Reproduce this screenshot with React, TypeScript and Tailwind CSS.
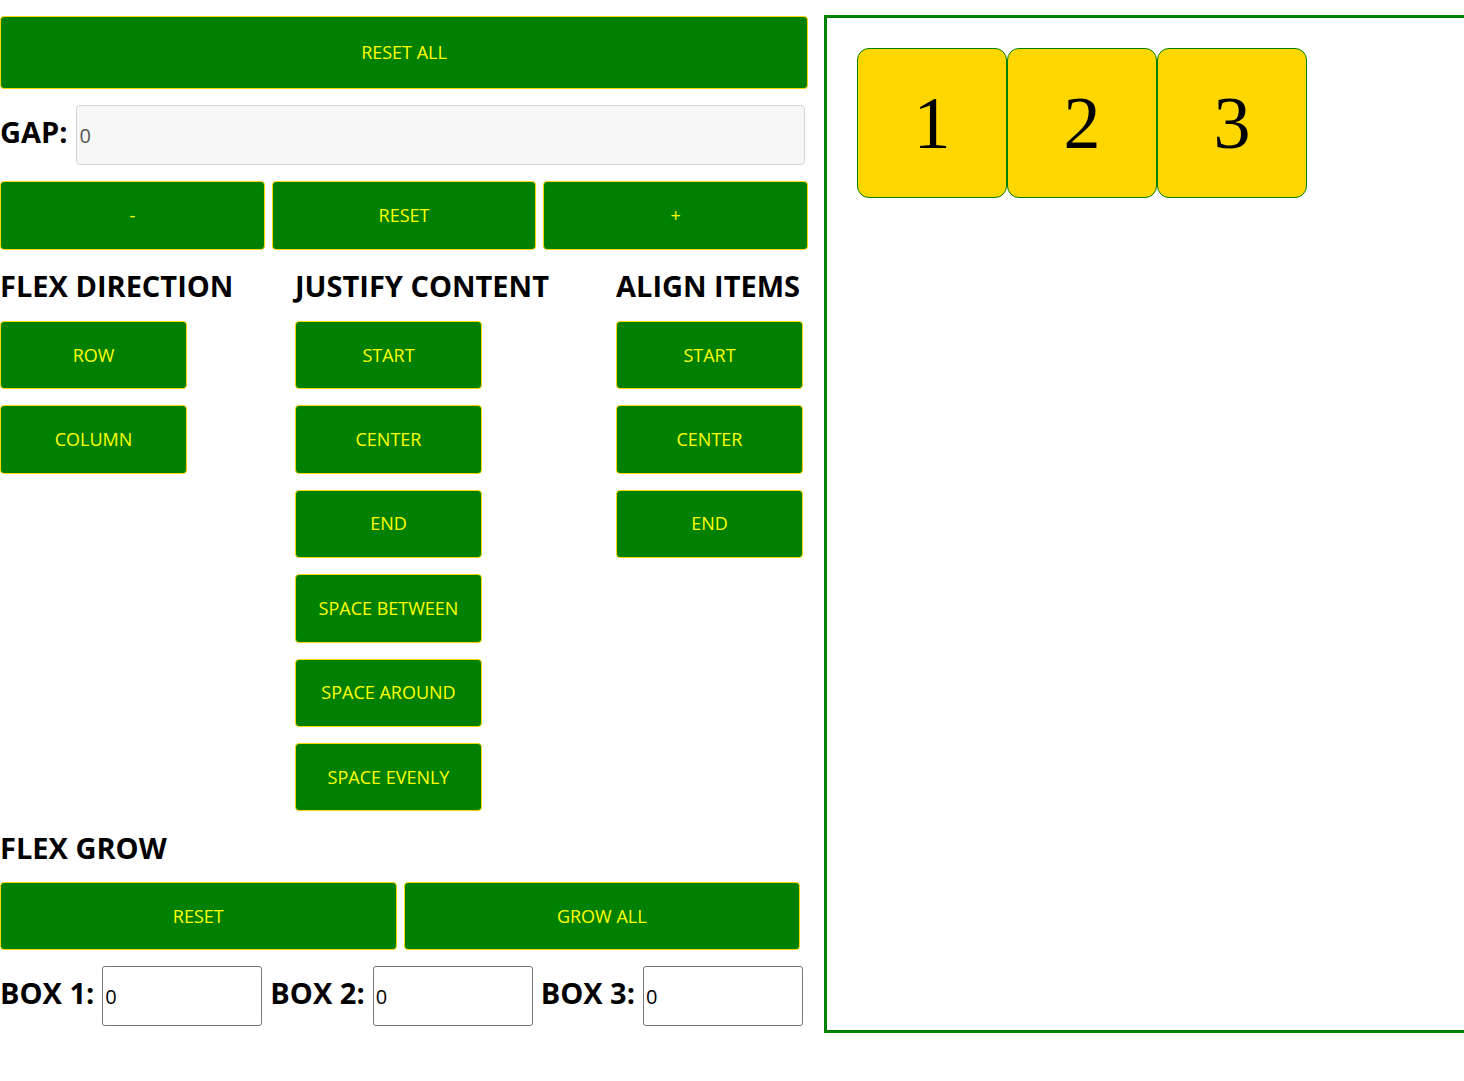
import React from "react";

const font = { fontFamily: '"Open Sans", "Noto Sans", sans-serif' };

function Btn({ children, className = "" }: { children: React.ReactNode; className?: string }) {
  return (
    <button
      className={
        "flex items-center justify-center rounded-[4px] border border-[#ffd700] bg-[#008000] text-[18px] text-[#ffff00] " +
        className
      }
    >
      {children}
    </button>
  );
}

function Heading({ children }: { children: React.ReactNode }) {
  return <h2 className="h-[40px] whitespace-nowrap text-[29px] font-bold leading-[40px] text-black">{children}</h2>;
}

export default function App() {
  const jc = ["START", "CENTER", "END", "SPACE BETWEEN", "SPACE AROUND", "SPACE EVENLY"];
  const ai = ["START", "CENTER", "END"];
  return (
    <div className="w-full overflow-hidden bg-white" style={font}>
      <div className="flex items-start gap-4 pt-[15px]">
        <div className="mt-px flex w-[808px] shrink-0 flex-col">
          <Btn className="h-[73px] w-full">RESET ALL</Btn>
          <div className="mt-4 flex items-center">
            <span className="mb-[6px] text-[29px] font-bold text-black">GAP:</span>
            <input
              readOnly
              value="0"
              className="ml-2 mr-[3px] h-[60px] flex-1 rounded-[4px] border border-[#d4d4d4] bg-[#f7f7f7] px-[3px] text-[20px] text-[#555]"
            />
          </div>
          <div className="mt-4 flex gap-[7px]">
            <Btn className="h-[69px] flex-1">-</Btn>
            <Btn className="h-[69px] flex-1">RESET</Btn>
            <Btn className="h-[69px] flex-1">+</Btn>
          </div>
          <div className="mt-4 flex">
            <div className="flex w-[295px] flex-col">
              <Heading>FLEX DIRECTION</Heading>
              <div className="mt-[15px] flex flex-col gap-4">
                <Btn className="h-[68.4px] w-[187px]">ROW</Btn>
                <Btn className="h-[68.4px] w-[187px]">COLUMN</Btn>
              </div>
            </div>
            <div className="flex w-[321px] flex-col">
              <Heading>JUSTIFY CONTENT</Heading>
              <div className="mt-[15px] flex flex-col gap-4">
                {jc.map((t) => (
                  <Btn key={t} className="h-[68.4px] w-[187px]">
                    {t}
                  </Btn>
                ))}
              </div>
            </div>
            <div className="flex flex-col">
              <Heading>ALIGN ITEMS</Heading>
              <div className="mt-[15px] flex flex-col gap-4">
                {ai.map((t) => (
                  <Btn key={t} className="h-[68.4px] w-[187px]">
                    {t}
                  </Btn>
                ))}
              </div>
            </div>
          </div>
          <div className="mt-[17px]">
            <Heading>FLEX GROW</Heading>
          </div>
          <div className="mt-[14px] flex w-[800px] gap-[7px]">
            <Btn className="h-[68px] flex-1">RESET</Btn>
            <Btn className="h-[68px] flex-1">GROW ALL</Btn>
          </div>
          <div className="mt-4 flex items-center gap-2">
            {[1, 2, 3].map((n) => (
              <React.Fragment key={n}>
                <span className="mb-[7px] whitespace-nowrap text-[29px] font-bold text-black">BOX {n}:</span>
                <input
                  readOnly
                  value="0"
                  className="h-[60px] w-[160px] rounded-[3px] border border-[#767676] bg-white px-[2px] text-[20px] text-black"
                />
              </React.Fragment>
            ))}
          </div>
        </div>
        <div className="h-[1018px] w-[700px] shrink-0 border-[3px] border-[#008000] p-[30px]">
          <div className="flex">
            {[1, 2, 3].map((n) => (
              <div
                key={n}
                className="flex h-[150px] w-[150px] items-center justify-center rounded-[12px] border border-[#008000] bg-[#ffd700] text-[74px] text-black"
                style={{ fontFamily: '"Liberation Serif", "Times New Roman", serif' }}
              >
                {n}
              </div>
            ))}
          </div>
        </div>
      </div>
    </div>
  );
}
